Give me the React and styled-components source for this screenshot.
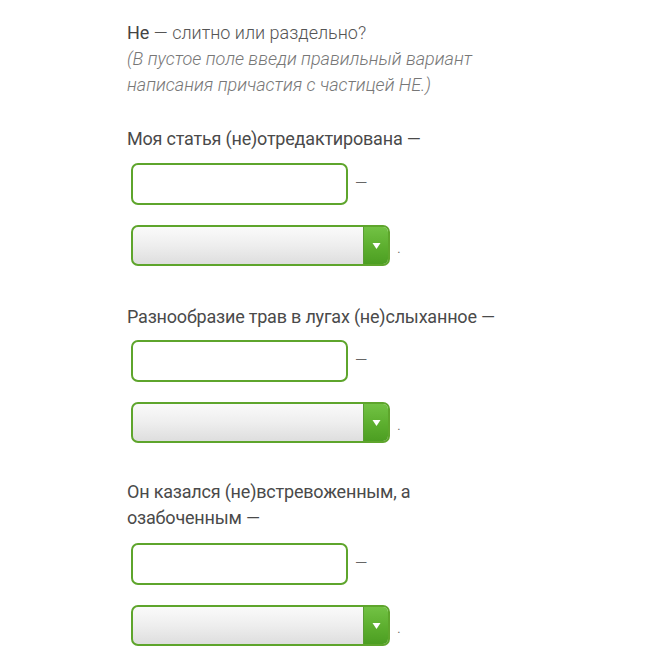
import styled, { createGlobalStyle } from 'styled-components';

const GlobalStyle = createGlobalStyle`
  html, body {
    margin: 0;
    padding: 0;
    background: #ffffff;
  }
  body {
    font-family: Roboto, "Noto Sans", sans-serif;
  }
`;

const Page = styled.div`
  width: 658px;
  height: 658px;
  overflow: hidden;
  padding: 20px 0 0 127px;
  box-sizing: border-box;
`;

const Intro = styled.div`
  font-size: 18px;
  line-height: 26px;
  color: #555;
  max-width: 350px;
  margin-bottom: 28px;
`;

const Lead = styled.span`
  font-weight: 400;
  color: #444;
`;

const LightText = styled.span`
  font-weight: 300;
`;

const Hint = styled.div`
  font-weight: 300;
  font-style: italic;
  color: #777;
`;

const Task = styled.div`
  display: flex;
  flex-direction: column;
  margin-bottom: ${p => p.$gap || 38}px;
`;

const Question = styled.div`
  font-size: 18px;
  line-height: 26px;
  letter-spacing: -0.2px;
  color: #4a4a4a;
  max-width: 400px;
  margin-bottom: ${p => p.$gap || 11}px;
`;

const FieldRow = styled.div`
  display: flex;
  align-items: ${p => (p.$end ? 'flex-end' : 'center')};
  gap: 7px;
  padding-left: 4px;
  margin-bottom: ${p => p.$gap || 0}px;
`;

const TextInput = styled.div`
  width: 217px;
  height: 42px;
  box-sizing: border-box;
  border: 2.5px solid #5ea52c;
  border-radius: 7px;
  background: #fff;
`;

const Select = styled.div`
  display: flex;
  width: 259px;
  height: 41px;
  box-sizing: border-box;
  border: 2.5px solid #5ea52c;
  border-radius: 7px;
  overflow: hidden;
  background: linear-gradient(to bottom, #fafafa 0%, #eeeeee 50%, #dedede 100%);
`;

const SelectBody = styled.div`
  flex: 1;
`;

const SelectButton = styled.div`
  width: 24px;
  display: flex;
  align-items: center;
  justify-content: center;
  background: linear-gradient(to bottom, #72c244 0%, #5cae2e 55%, #4c9e22 100%);
  border-left: 1px solid #5a9c35;
`;

const Mark = styled.span`
  font-size: 16px;
  line-height: 16px;
  color: #666;
  font-weight: 300;
  padding-bottom: ${p => (p.$dot ? 10 : 0)}px;
`;

const Arrow = () => (
  <svg width="9" height="8" viewBox="0 0 9 8">
    <path d="M0.5 1 L8.5 1 L4.5 7 Z" fill="#ffffff" />
  </svg>
);

const tasks = [
  { id: 1, text: 'Моя статья (не)отредактирована —', qGap: 11, gap: 38 },
  { id: 2, text: 'Разнообразие трав в лугах (не)слыханное —', qGap: 10, gap: 36 },
  { id: 3, text: 'Он казался (не)встревоженным, а озабоченным —', qGap: 12, gap: 0 },
];

export default function App() {
  return (
    <>
      <GlobalStyle />
      <Page>
        <Intro>
          <Lead>Не</Lead> <LightText>— слитно или раздельно?</LightText>
          <Hint>
            (В пустое поле введи правильный вариант написания причастия с частицей НЕ.)
          </Hint>
        </Intro>
        {tasks.map(task => (
          <Task key={task.id} $gap={task.gap}>
            <Question $gap={task.qGap}>{task.text}</Question>
            <FieldRow $gap={20}>
              <TextInput />
              <Mark>—</Mark>
            </FieldRow>
            <FieldRow $end>
              <Select>
                <SelectBody />
                <SelectButton>
                  <Arrow />
                </SelectButton>
              </Select>
              <Mark $dot>.</Mark>
            </FieldRow>
          </Task>
        ))}
      </Page>
    </>
  );
}
